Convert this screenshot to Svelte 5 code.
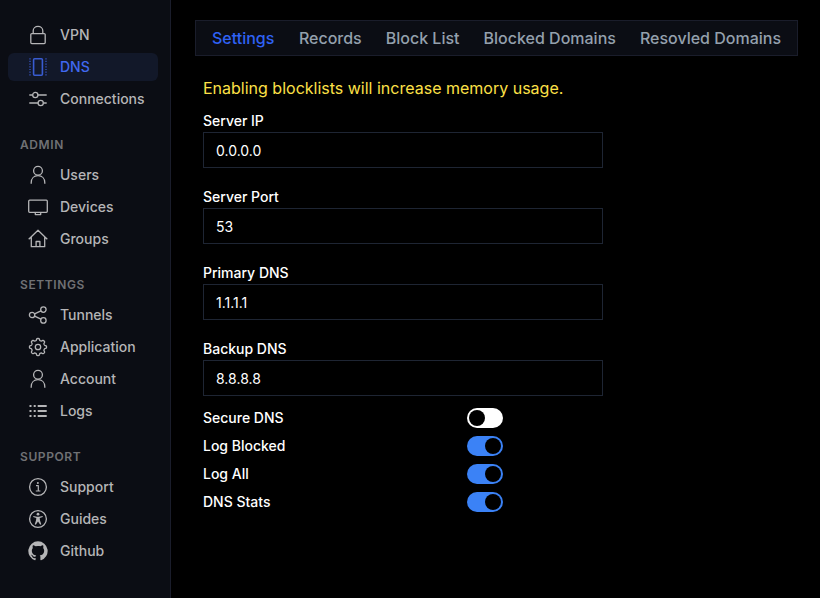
<script>
  const groups = [
    { title: '', items: [['lock', 'VPN'], ['dns', 'DNS'], ['sliders', 'Connections']] },
    { title: 'ADMIN', items: [['user', 'Users'], ['screen', 'Devices'], ['home', 'Groups']] },
    { title: 'SETTINGS', items: [['share', 'Tunnels'], ['gear', 'Application'], ['user', 'Account'], ['list', 'Logs']] },
    { title: 'SUPPORT', items: [['info', 'Support'], ['person', 'Guides'], ['github', 'Github']] },
  ];
  const tabs = ['Settings', 'Records', 'Block List', 'Blocked Domains', 'Resovled Domains'];
  let fields = $state([
    { label: 'Server IP', value: '0.0.0.0' },
    { label: 'Server Port', value: '53' },
    { label: 'Primary DNS', value: '1.1.1.1' },
    { label: 'Backup DNS', value: '8.8.8.8' },
  ]);
  let toggles = $state([
    { label: 'Secure DNS', on: false },
    { label: 'Log Blocked', on: true },
    { label: 'Log All', on: true },
    { label: 'DNS Stats', on: true },
  ]);
  let activeItem = $state('DNS');
  let activeTab = $state('Settings');

  // Cog outline: eight rounded teeth around the centre
  const gearPath = (() => {
    const pts = [];
    for (let i = 0; i <= 128; i++) {
      const a = (i / 128) * Math.PI * 2;
      const r = 7.6 + 0.95 * Math.tanh(2.2 * Math.cos(8 * a));
      pts.push(`${(10 + r * Math.cos(a)).toFixed(2)} ${(10 + r * Math.sin(a)).toFixed(2)}`);
    }
    return 'M' + pts.join('L') + 'Z';
  })();
</script>

{#snippet icon(name)}
  <svg class="icon" viewBox="0 0 20 20" width="20" height="20" aria-hidden="true">
    {#if name === 'lock'}
      <rect x="2.8" y="8.6" width="14.4" height="10" rx="1" />
      <path d="M5.2 8.5V5.8a4.8 4.4 0 0 1 9.6 0v2.7" />
    {:else if name === 'dns'}
      <rect x="5.6" y="1.7" width="8.8" height="16.6" rx="1" stroke-width="1.6" />
      <path d="M2 1.2v18M18 1.2v18" stroke-width="1.8" stroke-dasharray="1.2 1.47" opacity=".65" />
    {:else if name === 'sliders'}
      <path d="M1.3 6H4.7M10 6h8.7M1.3 14H10M15.3 14h3.4" stroke-width="1.5" />
      <circle cx="7.3" cy="6" r="2.6" /><circle cx="12.7" cy="14" r="2.6" />
    {:else if name === 'user'}
      <circle cx="10" cy="5.8" r="4.4" />
      <path d="M3.2 18.7v-1c0-4.3 2.8-7 6.8-7s6.8 2.7 6.8 7v1" />
    {:else if name === 'screen'}
      <rect x=".7" y="3.2" width="18.6" height="12.1" rx="1" />
      <path d="M7.3 15.4v2.2h5.4v-2.2" />
    {:else if name === 'home'}
      <path d="M.7 10.3 10 1.3l9.3 9M3.3 8.3v9.4h13.4V8.3M8.1 17.5v-5h3.8v5" />
    {:else if name === 'share'}
      <circle cx="4.1" cy="10" r="2.7" /><circle cx="15.4" cy="4.6" r="2.7" /><circle cx="15.4" cy="15.4" r="2.7" />
      <path d="m6.6 8.8 6.3-3M6.6 11.2l6.3 3" />
    {:else if name === 'gear'}
      <path d={gearPath} /><circle cx="10" cy="10" r="2.7" />
    {:else if name === 'list'}
      <path d="M9.7 5h9M9.7 10h9M9.7 15h9M1.5 5h2M1.5 10h2M1.5 15h2M5.7 5h2M5.7 10h2M5.7 15h2" stroke-width="2" />
    {:else if name === 'info'}
      <circle cx="10" cy="10" r="8.4" />
      <circle class="solid" cx="9.9" cy="5.9" r="1" />
      <path d="M8 8.6h2.3v5.2M7.8 14h4.6" stroke-width="1.2" />
    {:else if name === 'person'}
      <circle cx="10" cy="10" r="8.4" />
      <circle class="solid" cx="10" cy="5.2" r="1.4" />
      <path class="solid" d="M5.4 7.1 9 7.8h2l3.6-.7.2 1-3.1 1 .3 2.5 1.3 3.7-1.1.5L10 12.4l-2.2 3.4-1.1-.5L8 11.6l.3-2.5-3.1-1z" />
    {:else}
      <path class="solid" transform="scale(1.3333)" fill-rule="evenodd" d="M7.5.25a7.25 7.25 0 0 0-2.292 14.13c.363.066.495-.158.495-.35 0-.172-.006-.628-.01-1.233-2.016.438-2.442-.972-2.442-.972-.33-.838-.805-1.06-.805-1.06-.658-.45.05-.441.05-.441.728.051 1.11.747 1.11.747.647 1.108 1.697.788 2.11.602.066-.468.254-.788.46-.969-1.61-.183-3.302-.805-3.302-3.583 0-.792.283-1.438.747-1.945-.075-.184-.324-.92.07-1.919 0 0 .61-.195 1.994.744A6.95 6.95 0 0 1 7.5 3.756c.616.003 1.236.083 1.815.244 1.384-.939 1.993-.744 1.993-.744.395.998.147 1.735.072 1.919.465.507.745 1.153.745 1.945 0 2.785-1.695 3.398-3.31 3.577.26.224.492.667.492 1.343 0 .97-.009 1.751-.009 1.99 0 .193.131.419.499.348A7.25 7.25 0 0 0 7.5.25Z" />
    {/if}
  </svg>
{/snippet}

<div class="app">
  <aside>
    {#each groups as group}
      <nav>
        {#if group.title}<h2>{group.title}</h2>{/if}
        {#each group.items as [glyph, label]}
          <button class="item" class:active={activeItem === label} onclick={() => (activeItem = label)}>
            {@render icon(glyph)}<span>{label}</span>
          </button>
        {/each}
      </nav>
    {/each}
  </aside>

  <main>
    <div class="tabs" role="tablist">
      {#each tabs as tab}
        <button role="tab" aria-selected={activeTab === tab} class:active={activeTab === tab} onclick={() => (activeTab = tab)}>{tab}</button>
      {/each}
    </div>
    <section>
      <p class="notice">Enabling blocklists will increase memory usage.</p>
      <div class="fields">
        {#each fields as field}
          <label class="field"><span>{field.label}</span><input type="text" bind:value={field.value} /></label>
        {/each}
      </div>
      <div class="toggles">
        {#each toggles as toggle}
          <div class="toggle">
            <span>{toggle.label}</span>
            <button class="switch" class:on={toggle.on} role="switch" aria-checked={toggle.on} aria-label={toggle.label} onclick={() => (toggle.on = !toggle.on)}><i></i></button>
          </div>
        {/each}
      </div>
    </section>
  </main>
</div>

<style>
  :global(body) { background: #000; }
  .app { display: flex; height: 598px; overflow: hidden; background: #000; color: #fff; font: 500 14px/20px Inter, sans-serif; }
  button { margin: 0; border: 0; background: none; font: inherit; cursor: pointer; }
  aside { box-sizing: border-box; flex: 0 0 171px; padding: 21px 12px 0 8px; background: #0b0d14; border-right: 1px solid #1a1d2b; display: flex; flex-direction: column; gap: 24px; }
  nav { display: flex; flex-direction: column; gap: 4px; }
  h2 { margin: 0 0 4px; padding-left: 12px; font-size: 12px; line-height: 16px; font-weight: 600; letter-spacing: .6px; color: #707174; }
  .item { display: flex; align-items: center; gap: 12px; height: 28px; padding: 0 0 0 20px; border-radius: 6px; color: #b5b5b7; text-align: left; }
  .item.active { background: #121829; color: #4068ef; }
  .icon { flex: none; fill: none; stroke: currentColor; stroke-width: 1.3; stroke-linejoin: round; }
  .item.active .icon { opacity: .85; }
  .solid { fill: currentColor; stroke: none; }
  main { padding: 20px 0 0 24px; }
  .tabs { box-sizing: border-box; display: flex; align-items: center; width: 603px; height: 36px; padding: 0 4px; background: #0b0d14; border: 1px solid #1a1d2b; }
  .tabs button { padding: 0 12px; font-size: 16px; line-height: 24px; white-space: nowrap; color: #94a0ad; }
  .tabs button.active { padding-right: 12.5px; color: #2f62f5; }
  section { padding: 20px 8px 0; }
  .notice { margin: 0; font-size: 16px; font-weight: 400; line-height: 24px; color: #fde047; }
  .fields { display: flex; flex-direction: column; gap: 19px; width: 400px; padding-top: 11px; }
  .field { display: flex; flex-direction: column; height: 57px; }
  .field span { line-height: 20px; height: 21px; flex: none; }
  .field input { box-sizing: border-box; flex: none; width: 400px; height: 36px; padding: 1px 12px 0; border: 1px solid #1e2533; background: #000; color: #fff; font: inherit; font-weight: 400; outline: none; }
  .toggles { display: flex; flex-direction: column; gap: 8px; width: 300px; padding-top: 12px; }
  .toggle { display: flex; justify-content: space-between; align-items: center; height: 20px; }
  .switch { width: 36px; height: 20px; padding: 2px; border-radius: 10px; background: #fff; display: flex; }
  .switch i { width: 16px; height: 16px; border-radius: 50%; background: #000; }
  .switch.on { background: #3b82f6; justify-content: flex-end; }
</style>
